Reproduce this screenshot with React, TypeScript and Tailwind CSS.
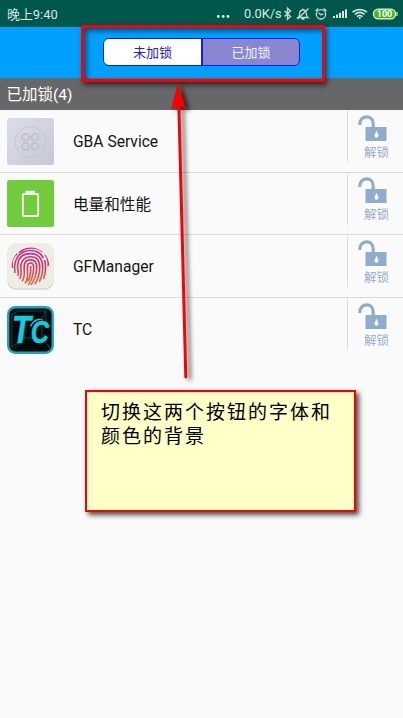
import React from "react";

const sans = "font-['Roboto','Noto_Sans_CJK_SC',sans-serif]";

function StatusIcons() {
  return (
    <svg className="absolute left-[210px] top-0" width="193" height="27" fill="none" stroke="#c4dad5" strokeWidth="1.1">
      <g fill="#e4efed" stroke="none">
        <circle cx="8.3" cy="16.5" r="1.4" />
        <circle cx="13.2" cy="16.5" r="1.4" />
        <circle cx="18" cy="16.5" r="1.4" />
      </g>
      <path d="M74.500 11l6 5.500-3 2.700V8.300l3 2.700-6 5.500" strokeWidth="1.400" />
      <path d="M88 17.500c1.500-1 1.700-2.500 1.700-4 0-2.200 1.300-3.500 3.300-3.500s3.300 1.300 3.300 3.500c0 1.500.2 3 1.700 4zM91.500 19h3M93 8.500V10M87.500 19L98.500 8.500" strokeWidth="1.300" />
      <circle cx="111" cy="14.300" r="4.700" strokeWidth="1.300" />
      <path d="M108.500 12.800l2.500 2 2.500-1M105.500 11l2.800-2.500M116.500 11l-2.800-2.500" strokeWidth="1.300" />
      <g fill="#d5e6e2" stroke="none">
        <rect x="123" y="16" width="2" height="2" />
        <rect x="126" y="14.500" width="2" height="3.500" />
        <rect x="129" y="12.800" width="2" height="5.200" />
        <rect x="132" y="11" width="2" height="7" />
        <rect x="135" y="9.300" width="2" height="8.700" />
      </g>
      <path d="M142.500 12.200c4.300-3.700 10.200-3.700 14.500 0M144.800 14.500c3-2.500 6.900-2.500 9.900 0M147 16.600c1.700-1.300 3.800-1.300 5.500 0" stroke="#d8e8e5" strokeWidth="1.600" />
      <circle cx="149.800" cy="18" r="1" fill="#d8e8e5" stroke="none" />
      <rect x="163.500" y="9.100" width="22" height="9.800" rx="4.700" fill="#48b51c" stroke="#e8f4e6" strokeWidth="1.300" />
      <path d="M187 12v4" stroke="#e8f4e6" />
      <text x="174.500" y="17.300" fontSize="9" fontWeight="700" textAnchor="middle" fill="#fff" stroke="none" className={sans}>100</text>
    </svg>
  );
}

function ServiceIcon() {
  return (
    <svg width="47" height="47" viewBox="0 0 47 47" fill="none">
      <defs>
        <linearGradient id="silver" x1="0" y1="0" x2="1" y2="1">
          <stop stopColor="#dbdde6" />
          <stop offset="1" stopColor="#c7c8d7" />
        </linearGradient>
      </defs>
      <rect width="47" height="47" rx="2.500" fill="url(#silver)" />
      <circle cx="23.500" cy="24" r="15.500" stroke="#c5c7cf" />
      <g stroke="#bdbfca" strokeWidth="1.600">
        <circle cx="18.500" cy="19.200" r="3.500" />
        <circle cx="28" cy="19.200" r="3.500" />
        <circle cx="18.500" cy="28.500" r="3.500" />
        <circle cx="28" cy="28.500" r="3.500" />
      </g>
    </svg>
  );
}

function BatteryIcon() {
  return (
    <svg width="47" height="47" viewBox="0 0 47 47" fill="none">
      <rect width="47" height="47" rx="2.500" fill="#72ca3d" />
      <rect x="15.800" y="14" width="15.400" height="22" rx="1" stroke="#fafff5" strokeWidth="1.800" />
      <path d="M18.500 11.800h9.500" stroke="#fafff5" strokeWidth="2" />
    </svg>
  );
}

function FingerprintIcon() {
  return (
    <svg width="47" height="47" viewBox="0 0 47 47" fill="none">
      <defs>
        <linearGradient id="print" gradientUnits="userSpaceOnUse" x1="24" y1="4" x2="24" y2="42">
          <stop stopColor="#c62b9f" />
          <stop offset=".5" stopColor="#d03967" />
          <stop offset="1" stopColor="#e07843" />
        </linearGradient>
        <clipPath id="oval"><ellipse cx="23.500" cy="23.500" rx="19" ry="19" /></clipPath>
      </defs>
      <rect x=".5" y=".8" width="46" height="46" rx="8.500" fill="#d1d2ca" />
      <rect x=".5" y=".2" width="46" height="45.300" rx="8.500" fill="#ededE8" />
      <g clipPath="url(#oval)" stroke="url(#print)" strokeWidth="1.650">
        <path d="M12 9.500C20 3 30 4 36 9M38 11.500c2.500 3 3.500 7 3.200 11.500" />
        <path d="M5.500 25C4 18 6.500 13 10.500 10.500M8 30c-2-13 4-22.500 15.500-22.500 6.500 0 10.500 3 13 7.500M37.500 17c2.200 7 .7 14-1 19" />
        <path d="M10.800 33c1.500-4-1-7 .1-12.500C12 14 17 10.600 23.500 10.600c8 0 12 5.500 12.200 13.400 0 6-1.200 10.500-3.500 15" />
        <path d="M12.500 36c3.500-5 .3-10 1.600-15 1.200-4.500 4.700-7.300 9.400-7.300 6 0 9.200 4 9.200 10.300 0 6.500-1.700 12.500-5 17.500" />
        <path d="M15 38.500c4-6 1.700-11 2.200-16 .4-3.500 2.700-5.700 6.300-5.700 4.200 0 6.200 2.700 6.200 7.200 0 7-2.200 13.500-6 18" />
        <path d="M18 40.500c4.300-6 2-12 2.500-17.500.2-2 1.200-3 3-3 2.200 0 3.200 1.500 3.200 4 0 7.500-2 13-5.500 18M23.600 23c.3 5 0 11-3 15.500" />
      </g>
    </svg>
  );
}

function TcIcon() {
  return (
    <svg width="47" height="48" viewBox="0 0 47 48" fill="none">
      <rect x="1.200" y="1.200" width="44.500" height="45.500" rx="7" fill="#030809" stroke="#14a9bc" strokeWidth="2.400" />
      <path d="M5 8l7-3h27v11l5 4M5 8v33l12-9h18l8 10M8 42l9-10v-5M39 5l-4 7v25M7 15l5-5" stroke="#0b5660" strokeWidth=".8" />
      <text x="5" y="36.500" fontSize="38" fontStyle="italic" fontWeight="700" textLength="37" lengthAdjust="spacingAndGlyphs" fill="#10cee0" stroke="#10cee0" strokeWidth=".5" className="font-['Liberation_Sans',sans-serif]">T<tspan fontSize="31">C</tspan></text>
      <path d="M23 20c3-6 8-9 14-6-6-1-11 2-13 7z" fill="#10cee0" />
    </svg>
  );
}

function LockIcon() {
  return (
    <svg width="30" height="27" viewBox="0 0 30 27" fill="none">
      <path d="M1.700 10C1.700 4.800 4.500 1.900 8.500 1.900s6.700 2.800 6.700 7V13" stroke="#8faccd" strokeWidth="3.200" />
      <rect x="7.500" y="12" width="21" height="14" fill="#8faccd" />
      <path d="M18.500 16.200l-.8 2.200c-1.500 2-.8 4 .8 4s2.300-2 .8-4z" fill="#f8fbff" stroke="#f8fbff" strokeWidth=".6" />
    </svg>
  );
}

const rows = [
  { name: "GBA Service", icon: <ServiceIcon /> },
  { name: "电量和性能", icon: <BatteryIcon /> },
  { name: "GFManager", icon: <FingerprintIcon /> },
  { name: "TC", icon: <TcIcon /> },
];

export default function App() {
  return (
    <main className={`relative h-[718px] w-[403px] overflow-hidden bg-[#fafafa] ${sans}`}>
      <header className="relative h-[27px] bg-[#00574b] leading-[28px] text-[#d9e7e4]">
        <span className="block pl-[7px] pt-px text-[12.900px] leading-[27px]">晚上9:40</span>
        <span className="absolute left-[244px] top-0 whitespace-nowrap text-[12.800px]">0.0K/s</span>
        <StatusIcons />
      </header>
      <div className="flex h-[51px] justify-center bg-[#00a0ff] pt-[11px]">
        <div className="flex h-[28px] w-[197px] overflow-hidden rounded-[6px] border-[1.500px] border-[#1717e8] text-[13px] leading-[27px]">
          <button className="w-[99px] border-r-2 border-[#1717e8] bg-white text-[#2a20c5]">未加锁</button>
          <button className="flex-1 bg-[#8985cf] text-[#f2f1ff]">已加锁</button>
        </div>
      </div>
      <h1 className="h-8 bg-[#676668] pl-[6.500px] text-[15.500px] font-normal leading-[34px] text-white">已加锁(4)</h1>
      <ul>
        {rows.map((row) => (
          <li key={row.name} className="flex h-[62.700px] border-b border-[#dadada] last:border-b-0">
            <div className="w-[65px] pl-[7.400px] pt-[7.600px]">{row.icon}</div>
            <div className="flex-1 pl-2 text-[15.600px] leading-[65px] text-[#151515]">{row.name}</div>
            <button className="flex h-[52px] w-[56px] flex-col items-start border-l border-[#dedee2] pl-[10px] pt-[4.500px] text-[#94adca]">
              <LockIcon />
              <span className="ml-[6px] mt-[2px] text-[12.500px] leading-[18px]">解锁</span>
            </button>
          </li>
        ))}
      </ul>
      <div className="absolute left-[81px] top-[25px] h-[57px] w-[244px] border-[3px] border-[#fa0000] shadow-[2px_3px_5px_rgba(0,0,0,.6),inset_3px_3px_5px_rgba(0,0,0,.5)]" />
      <svg className="absolute left-[160px] top-[78px] overflow-visible drop-shadow-[4px_2px_2px_rgba(0,0,0,.6)]" width="40" height="305" fill="none">
        <path d="M18.800 25L25.800 299" stroke="#fa0000" strokeWidth="3" strokeLinecap="round" />
        <path d="M17.800 5L26 31.500l-7-4-8 4z" fill="#fa0000" />
      </svg>
      <aside className="absolute left-[85px] top-[390px] h-[122px] w-[271px] border-2 border-[#fa0000] bg-[#ffffc8] pl-[14px] pt-[7px] font-['Noto_Sans_CJK_SC',sans-serif] text-[19px] leading-[24px] tracking-[2px] text-black shadow-[3px_3px_5px_rgba(0,0,0,.7)]">
        <p>切换这两个按钮的字体和</p>
        <p>颜色的背景</p>
      </aside>
    </main>
  );
}
